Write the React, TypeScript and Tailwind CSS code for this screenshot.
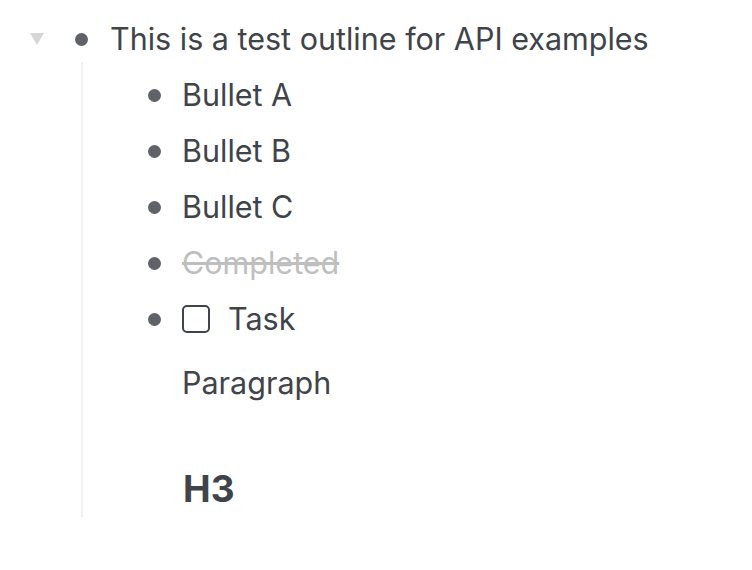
import React from "react";

const Bullet = () => (
  <div className="w-[30px] h-full flex items-center justify-center shrink-0">
    <div className="w-[13px] h-[13px] rounded-full bg-[#5f6369]" />
  </div>
);

const Row = ({ children }: { children: React.ReactNode }) => (
  <div className="flex items-center h-[56px] pl-[56px]">
    <Bullet />
    <div className="ml-[13px] flex items-center">{children}</div>
  </div>
);

export default function App() {
  return (
    <div
      className="w-[752px] h-[570px] bg-white text-[#3f444a] text-[30.5px] leading-[56px]"
      style={{ fontFamily: "Inter, 'Noto Sans', sans-serif" }}
    >
      <div className="pt-[11px]">
        <div className="flex items-center h-[56px] pl-[23px]">
          <div className="w-[28px] h-full flex items-center justify-center">
            <svg width="14" height="12" viewBox="0 0 14 12">
              <polygon points="0,0 14,0 7,12" fill="#d6d6d6" />
            </svg>
          </div>
          <div className="ml-[15px] h-full flex">
            <Bullet />
          </div>
          <div className="ml-[14px] whitespace-nowrap">This is a test outline for API examples</div>
        </div>
        <div className="ml-[81px] -mt-[5px] pt-[5px] border-l-2 border-[#efefef] w-[300px]">
          <Row>Bullet A</Row>
          <Row>Bullet B</Row>
          <Row>Bullet C</Row>
          <Row>
            <span className="line-through text-[#bfbfbf]">Completed</span>
          </Row>
          <Row>
            <div className="w-[28px] h-[28px] rounded-[5px] border-2 border-[#3f444a] box-border" />
            <span className="ml-[18px]">Task</span>
          </Row>
          <div className="h-[72px] flex items-center pl-[99px]">Paragraph</div>
          <div className="pt-[42px] pl-[100px]">
            <h3 className="h-[56px] flex items-center text-[37px] font-bold">H3</h3>
          </div>
        </div>
      </div>
    </div>
  );
}
